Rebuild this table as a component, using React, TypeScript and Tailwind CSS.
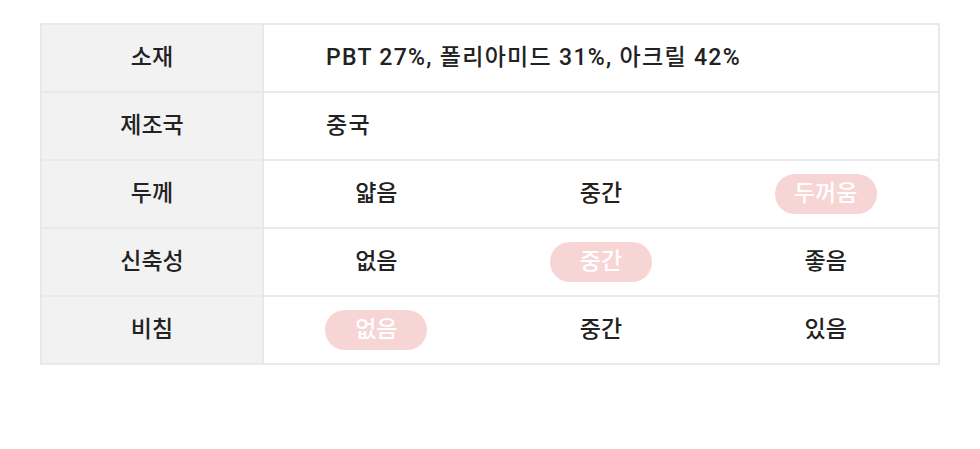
const rows: { label: string; text?: string; options?: string[]; active?: number }[] = [
  { label: '소재', text: 'PBT 27%, 폴리아미드 31%, 아크릴 42%' },
  { label: '제조국', text: '중국' },
  { label: '두께', options: ['얇음', '중간', '두꺼움'], active: 2 },
  { label: '신축성', options: ['없음', '중간', '좋음'], active: 1 },
  { label: '비침', options: ['없음', '중간', '있음'], active: 0 },
];

export default function App() {
  return (
    <div
      className="w-[980px] h-[449px] bg-white pt-[23px] px-[40px] text-[#222]"
      style={{ fontFamily: 'Roboto, "Noto Sans CJK KR", sans-serif' }}
    >
      <div className="border-2 border-[#e9e9e9] border-b-0">
        {rows.map((r) => (
          <div key={r.label} className="flex h-[68px] border-b-2 border-[#e9e9e9]">
            <div className="w-[222px] shrink-0 bg-[#f2f2f2] border-r-2 border-[#e9e9e9] flex items-center justify-center text-[23px] font-medium">
              {r.label}
            </div>
            {r.text ? (
              <div className="flex-1 flex items-center pl-[62px] text-[23px] font-medium tracking-[1.3px]">{r.text}</div>
            ) : (
              <div className="flex-1 grid grid-cols-3 items-center">
                {r.options!.map((o, i) => (
                  <div key={o} className="flex justify-center">
                    {i === r.active ? (
                      <span className="w-[102px] h-[40px] rounded-full bg-[#f7d5d5] text-white flex items-center justify-center text-[23px] font-medium">
                        {o}
                      </span>
                    ) : (
                      <span className="h-[40px] flex items-center text-[23px] font-medium">{o}</span>
                    )}
                  </div>
                ))}
              </div>
            )}
          </div>
        ))}
      </div>
    </div>
  );
}
